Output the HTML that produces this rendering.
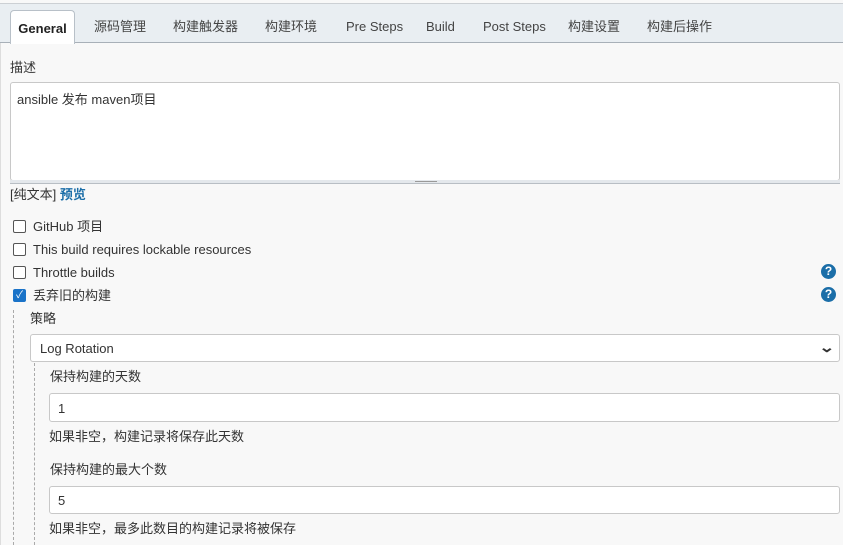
<!DOCTYPE html>
<html><head><meta charset="utf-8"><style>
body{margin:0;width:843px;height:545px;overflow:hidden;background:#f8f8f8;font-family:"Liberation Sans","Noto Sans CJK SC",sans-serif;font-size:13px;line-height:16px;color:#333;position:relative}
.a{position:absolute;line-height:16px}
.tabs{left:0;top:3px;width:843px;height:38px;background:#e9eef2;border-top:1px solid #ccd0d4;border-bottom:1px solid #a8b0b8}
.tab{position:absolute;top:15px;color:#444;line-height:16px;height:16px}
.gen{left:10px;top:6px;width:63px;height:33px;background:#fff;border:1px solid #b8c0c8;border-bottom:none;border-radius:4px 4px 0 0;font-weight:bold;color:#222;text-align:center;line-height:35px}
.box{background:#fff;border:1px solid #c8c8c8;border-radius:3px;box-sizing:border-box}
.cb{width:11px;height:11px;border:1px solid #555;border-radius:2px;background:#fff;left:13px}
.help{width:15px;height:15px;border-radius:50%;background:#1b6ea8;color:#fff;font-weight:bold;font-size:12px;text-align:center;line-height:15px;left:821px}
</style></head><body>
<div class="a" style="left:0;top:42px;width:1px;height:503px;background:#ddd"></div>
<div class="a tabs">
<div class="a gen">General</div>
<span class="tab" style="left:94px">源码管理</span>
<span class="tab" style="left:173px">构建触发器</span>
<span class="tab" style="left:265px">构建环境</span>
<span class="tab" style="left:346px">Pre Steps</span>
<span class="tab" style="left:426px">Build</span>
<span class="tab" style="left:483px">Post Steps</span>
<span class="tab" style="left:568px">构建设置</span>
<span class="tab" style="left:647px">构建后操作</span>
</div>
<div class="a" style="left:10px;top:60px">描述</div>
<div class="a box" style="left:10px;top:82px;width:830px;height:99px;padding:9px 6px">ansible 发布 maven项目</div>
<div class="a" style="left:10px;top:180px;width:830px;height:3px;background:#e4e8ec;border-bottom:1px solid #b8bec4"></div>
<div class="a" style="left:415px;top:181px;width:22px;height:1px;background:#999"></div>
<div class="a" style="left:10px;top:187px">[纯文本] <b style="color:#1b6ea8">预览</b></div>
<div class="a cb" style="top:220px"></div><div class="a" style="left:33px;top:219px">GitHub 项目</div>
<div class="a cb" style="top:243px"></div><div class="a" style="left:33px;top:242px">This build requires lockable resources</div>
<div class="a cb" style="top:266px"></div><div class="a" style="left:33px;top:265px">Throttle builds</div>
<div class="a cb" style="top:289px;background:#1a73c8;border-color:#1a73c8;color:#fff;font-size:10px;line-height:11px;text-align:center">✓</div><div class="a" style="left:33px;top:288px">丢弃旧的构建</div>
<div class="a help" style="top:264px">?</div>
<div class="a help" style="top:287px">?</div>
<div class="a" style="left:13px;top:310px;height:235px;border-left:1px dashed #aaa"></div>
<div class="a" style="left:30px;top:311px">策略</div>
<div class="a box" style="left:30px;top:334px;width:810px;height:28px;padding:6px 9px">Log Rotation<span style="position:absolute;right:6px;top:4px;font-size:14px;font-weight:bold;transform:scaleX(1.4)">⌄</span></div>
<div class="a" style="left:34px;top:363px;height:182px;border-left:1px dashed #aaa"></div>
<div class="a" style="left:50px;top:369px">保持构建的天数</div>
<div class="a box" style="left:49px;top:393px;width:791px;height:29px;padding:7px 8px">1</div>
<div class="a" style="left:49px;top:429px">如果非空，构建记录将保存此天数</div>
<div class="a" style="left:50px;top:462px">保持构建的最大个数</div>
<div class="a box" style="left:49px;top:486px;width:791px;height:28px;padding:6px 8px">5</div>
<div class="a" style="left:49px;top:521px">如果非空，最多此数目的构建记录将被保存</div>
</body></html>
